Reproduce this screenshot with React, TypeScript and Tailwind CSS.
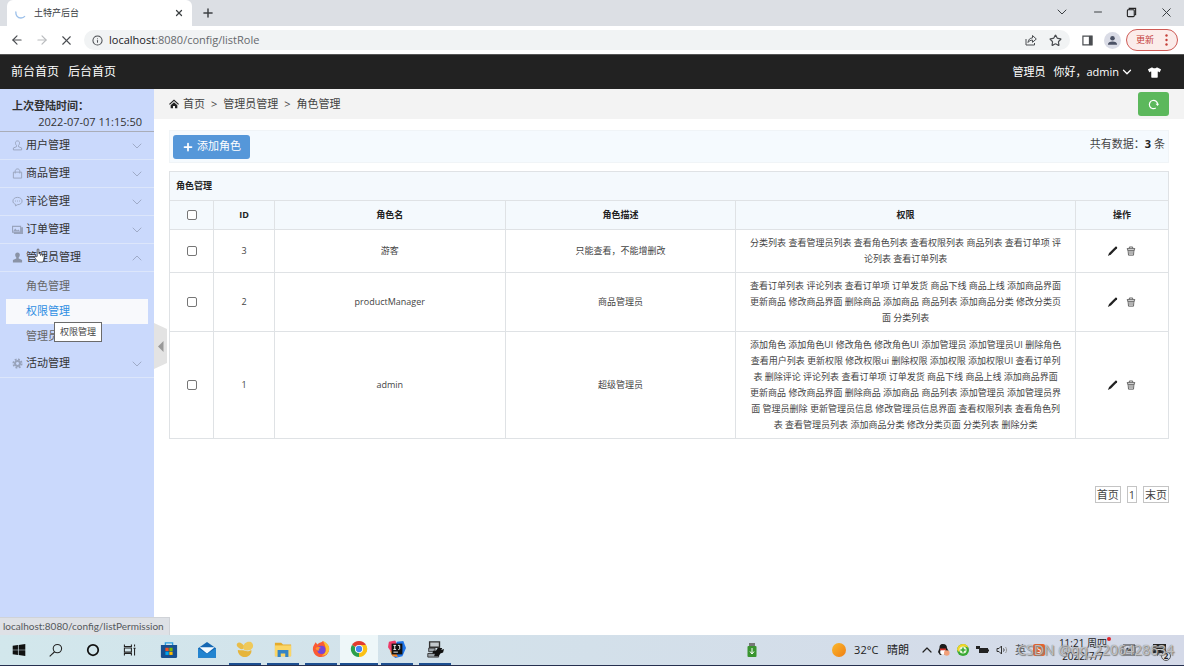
import { useState } from "react";
import type { ReactNode } from "react";
import { ArrowLeft, ArrowRight, ChevronDown, ChevronUp, Info, Minus, Plus, Star, X } from "lucide-react";
import { FaTshirt } from "react-icons/fa";

const roles = [
    {
        id: 3,
        name: "游客",
        desc: "只能查看，不能增删改",
        perms: "分类列表 查看管理员列表 查看角色列表 查看权限列表 商品列表 查看订单项 评论列表 查看订单列表",
    },
    {
        id: 2,
        name: "productManager",
        desc: "商品管理员",
        perms: "查看订单列表 评论列表 查看订单项 订单发货 商品下线 商品上线 添加商品界面 更新商品 修改商品界面 删除商品 添加商品 商品列表 添加商品分类 修改分类页面 分类列表",
    },
    {
        id: 1,
        name: "admin",
        desc: "超级管理员",
        perms: "添加角色 添加角色UI 修改角色 修改角色UI 添加管理员 添加管理员UI 删除角色 查看用户列表 更新权限 修改权限ui 删除权限 添加权限 添加权限UI 查看订单列表 删除评论 评论列表 查看订单项 订单发货 商品下线 商品上线 添加商品界面 更新商品 修改商品界面 删除商品 添加商品 商品列表 添加管理员 添加管理员界面 管理员删除 更新管理员信息 修改管理员信息界面 查看权限列表 查看角色列表 查看管理员列表 添加商品分类 修改分类页面 分类列表 删除分类",
    },
];

/* ---------- sidebar icons ---------- */
const iconClass = "w-[11px] h-[11px] text-[#98a3bb]";

const UserIcon = () => (
    <svg viewBox="0 0 12 12" className={iconClass} fill="none" stroke="currentColor">
        <path d="M6 1C4.300 1 3.600 2.200 3.800 3.600c.1 1 .5 1.800 1.100 2.300v1.400L1.500 8.700v2.100h9V8.700L7.100 7.300V5.900c.6-.5 1-1.300 1.100-2.300C8.400 2.200 7.700 1 6 1Z" />
    </svg>
);
const BagIcon = () => (
    <svg viewBox="0 0 12 12" className={iconClass} fill="none" stroke="currentColor">
        <path d="M1.500 4.500h9v6.500h-9zM3.500 6V3.500C3.500 2 4.500 1 6 1s2.500 1 2.500 2.500V6" />
    </svg>
);
const CommentIcon = () => (
    <svg viewBox="0 0 12 12" className={iconClass} fill="none" stroke="currentColor">
        <path d="M6 1.500c2.900 0 5 1.700 5 4s-2.100 4-5 4l-2.200 1.300.1-1.700C2.100 8.500 1 7.200 1 5.500c0-2.300 2.100-4 5-4Z" />
        <path d="M3.300 5.500h1M5.500 5.500h1M7.700 5.500h1" />
    </svg>
);
const OrderIcon = () => (
    <svg viewBox="0 0 12 12" className={iconClass}>
        <path d="M0 2h10v1.500h2V11H2V9.500H0Z" fill="currentColor" />
        <path d="M1.200 3.200h7.600v5H1.200z" fill="#cbd9fc" />
        <path d="m1.200 8 2.300-3 2 2 1.300-1 2 2Z" fill="currentColor" />
    </svg>
);
const AdminIcon = () => (
    <svg viewBox="0 0 12 12" className={iconClass} fill="#8a93a6">
        <path d="M6 .5C4.100.5 3.300 1.800 3.500 3.500c.1 1 .5 1.900 1.200 2.400v1.300L1 8.600V11.500h10V8.600L7.300 7.200V5.900c.7-.5 1.100-1.400 1.200-2.400C8.700 1.800 7.900.5 6 .5Z" />
    </svg>
);
const GearIcon = () => (
    <svg viewBox="0 0 12 12" className={iconClass} fill="none" stroke="currentColor">
        <circle cx="6" cy="6" r="4.500" strokeWidth="2" strokeDasharray="2 1.530" />
        <circle cx="6" cy="6" r="2.700" strokeWidth="2.200" />
    </svg>
);

const menu = [
    { label: "用户管理", icon: <UserIcon /> },
    { label: "商品管理", icon: <BagIcon /> },
    { label: "评论管理", icon: <CommentIcon /> },
    { label: "订单管理", icon: <OrderIcon /> },
    { label: "管理员管理", icon: <AdminIcon />, children: ["角色管理", "权限管理", "管理员管理"] },
    { label: "活动管理", icon: <GearIcon /> },
];

function BrowserChrome() {
    return (
        <header>
            {/* Tab strip */}
            <div className="h-[26px] bg-[#dcdfe4] flex items-center pl-[7px] text-[#3c4043]">
                <div className="w-[185px] h-full bg-white rounded-t-md flex items-center px-2">
                    <svg viewBox="0 0 12 12" className="w-3 h-3" fill="none" stroke="#9cc0ea" strokeWidth="1.300">
                        <path d="M1 4.500C.300 8 2.500 11 6 11c1.600 0 3-.6 4-1.800" />
                    </svg>
                    <span className="ml-[7px] text-[9px] flex-1">土特产后台</span>
                    <button aria-label="关闭标签页"><X className="w-[10px] h-[10px]" strokeWidth={3} /></button>
                </div>
                <button aria-label="新标签页" className="ml-[9px]"><Plus className="w-[14px] h-[14px]" strokeWidth={2.5} /></button>
                <div className="ml-auto flex items-center gap-[22px] pr-[10px] pb-0.5">
                    <button aria-label="搜索标签页"><ChevronDown className="w-4 h-4" strokeWidth={1.5} /></button>
                    <button aria-label="最小化"><Minus className="w-3 h-3" /></button>
                    <button aria-label="还原">
                        <svg viewBox="0 0 12 12" className="w-[11px] h-[11px]" fill="none" stroke="#222" strokeWidth="1.200">
                            <rect x="1.500" y="3" width="7.500" height="7.500" rx="1" />
                            <path d="M3.500 3V1.500h7v7H9" />
                        </svg>
                    </button>
                    <button aria-label="关闭"><X className="w-[15px] h-[15px]" strokeWidth={1.6} /></button>
                </div>
            </div>

            {/* Address bar */}
            <div className="h-7 bg-white flex items-center pl-[10px] pr-[6px] text-[#4a4d51]">
                <button aria-label="后退"><ArrowLeft className="w-[14px] h-[14px]" /></button>
                <button aria-label="前进" className="ml-[11px] text-[#b9bbbe]"><ArrowRight className="w-[14px] h-[14px]" /></button>
                <button aria-label="停止" className="ml-[10px]"><X className="w-[15px] h-[15px]" strokeWidth={1.8} /></button>
                <div className="ml-[10px] flex-1 h-5 rounded-full bg-[#f1f3f4] flex items-center px-2">
                    <Info className="w-[11px] h-[11px]" strokeWidth={2.2} />
                    <span className="ml-[6px] text-[11px] flex-1 text-[#66696d]"><span className="text-[#202124]">localhost</span>:8080/config/listRole</span>
                    <svg viewBox="0 0 12 12" className="w-3 h-3" fill="none" stroke="currentColor">
                        <path d="M1 5v6h8.500V9M3 8.500c.3-3 2-4.500 4.500-4.600V1.500L11.300 5 7.500 8.300V6.100C5.500 6.100 4 6.900 3 8.500Z" />
                    </svg>
                    <button aria-label="收藏" className="ml-3"><Star className="w-[13px] h-[13px]" strokeWidth={2.2} /></button>
                </div>
                <svg viewBox="0 0 12 12" className="ml-3 w-[11px] h-[11px]">
                    <path d="M1 1.200h10v9.600H1z" fill="none" stroke="#4a4d51" strokeWidth="1.300" />
                    <path d="M7.500 1h3.500v10H7.500z" fill="#4a4d51" />
                </svg>
                <span className="ml-[11px] w-[17px] h-[17px] rounded-full bg-[#dadce6] flex items-center justify-center">
                    <svg viewBox="0 0 12 12" className="w-[11px] h-[11px]" fill="#4b5265">
                        <circle cx="6" cy="3.500" r="2.500" />
                        <path d="M1 10.500C1 8 3 7 6 7s5 1 5 3.500Z" />
                    </svg>
                </span>
                <button className="ml-[5px] w-[52px] h-[22px] rounded-full border border-[#cf5b56] bg-[#fbecea] text-[#c5403a] text-[9px] flex items-center justify-between pl-[9px] pr-[9px]">
                    更新
                    <svg viewBox="0 0 3 12" className="w-[3px] h-3" fill="#c5403a">
                        <circle cx="1.500" cy="1.500" r="1.200" />
                        <circle cx="1.500" cy="6" r="1.200" />
                        <circle cx="1.500" cy="10.500" r="1.200" />
                    </svg>
                </button>
            </div>
        </header>
    );
}

function NavBar() {
    return (
        <nav className="h-[35px] bg-[#222222] text-white text-[12px] flex items-center pl-[11px] pr-[23px] border-t border-[#555]">
            <a href="#front">前台首页</a>
            <a href="#back" className="ml-[9px]">后台首页</a>
            <span className="ml-auto text-[11px]">管理员</span>
            <button className="ml-2 text-[11px] flex items-center gap-px">
                你好，admin
                <ChevronDown className="w-[14px] h-[14px]" strokeWidth={2.2} />
            </button>
            <button aria-label="换肤" className="ml-[14px]"><FaTshirt className="w-[13px] h-[13px]" /></button>
        </nav>
    );
}

function SideBar() {
    return (
        <aside className="relative w-[154px] shrink-0 bg-[#cad9fc] text-[#333]">
            <div className="h-[43px] pt-[9px] pl-3 pr-3 border-b border-[#a9adb8] text-[11px] leading-4">
                <p className="font-bold">上次登陆时间：</p>
                <p className="text-right">2022-07-07 11:15:50</p>
            </div>
            <ul>
                {menu.map((item) => (
                    <li key={item.label}>
                        <a href="#menu" className="h-7 pl-3 pr-[9px] flex items-center border-b border-[#dce6fb] text-[11px]">
                            {item.icon}
                            <span className="ml-[3px] flex-1">{item.label}</span>
                            {item.children
                                ? <ChevronUp className="w-4 h-4 text-[#9fabc8]" strokeWidth={1.5} />
                                : <ChevronDown className="w-4 h-4 text-[#9fabc8]" strokeWidth={1.5} />}
                        </a>
                        {item.children && (
                            <ul className="px-[6px] pt-[2px] pb-px text-[11px] text-[#666]">
                                {item.children.map((child) => (
                                    <li key={child}>
                                        <a
                                            href="#sub"
                                            className={`h-[25px] pl-5 flex items-center ${child === "权限管理" ? "bg-[#f8f9fc] text-[#2f8fe3]" : ""}`}
                                        >
                                            {child}
                                        </a>
                                    </li>
                                ))}
                            </ul>
                        )}
                    </li>
                ))}
            </ul>

            {/* Hover tooltip */}
            <div className="absolute left-[54px] top-[233px] h-5 px-[5px] bg-white border border-[#6b6b6b] text-[9px] text-[#444] flex items-center">
                权限管理
            </div>

            {/* Hand pointer */}
            <svg viewBox="0 0 12 16" className="absolute left-[34px] top-[159px] w-[11px] h-[15px]" fill="#fff" stroke="#333" strokeWidth=".8">
                <path d="M3.500 9V1.800c0-1.300 1.800-1.300 1.800 0V6l4.500 1c1 .3 1.500.9 1.400 1.900l-.7 4-.9 2.300H4.500L1 10.600c-.7-1.200.4-2 1.300-1.200Z" />
                <path d="M7.200 6.500v2M9.200 7v2" />
            </svg>

            {/* Collapse handle */}
            <button aria-label="收起菜单" className="absolute left-full top-[234px]">
                <svg viewBox="0 0 13 46" className="w-[13px] h-[46px]">
                    <path d="M0 0 13 6v34L0 46Z" fill="#e3e3e3" />
                    <path d="M9.500 18v11L4 23.500Z" fill="#999" />
                </svg>
            </button>

            {/* Link target shown by the browser */}
            <div className="absolute left-0 bottom-0 w-[170px] h-[18px] pl-[3px] bg-[#dee1e6] border-t border-r border-[#d0d3d8] font-[Lato] text-[10px] text-[#55585c] flex items-center whitespace-nowrap">
                localhost:8080/config/listPermission
            </div>
        </aside>
    );
}

function Tick({ label, checked, onChange }: { label: string; checked: boolean; onChange: () => void }) {
    return (
        <input
            type="checkbox"
            aria-label={label}
            checked={checked}
            onChange={onChange}
            className="appearance-none block mx-auto w-[10px] h-[10px] bg-white border border-[#767676] rounded-[2px] checked:bg-[#0075ff]"
        />
    );
}

const PencilIcon = () => (
    <svg viewBox="0 0 12 12" className="w-[11px] h-[11px]" fill="#222">
        <path d="M9.200.8c.9-.7 2.400.7 1.800 1.700L4.300 9.400 1 11l1.300-3.500Z" />
    </svg>
);
const TrashIcon = () => (
    <svg viewBox="0 0 12 12" className="w-[10px] h-[10px]" fill="none" stroke="#666" strokeWidth="1.200">
        <path d="M1 3.200h10M4 3V1.200h4V3M2 3.200v2h8v-2M2.500 5.200 3 11h6l.5-5.800M4.800 5.500V10M7.200 5.500V10" />
    </svg>
);

function RoleTable() {
    const [picked, setPicked] = useState<number[]>([]);
    const all = picked.length === roles.length;
    const toggle = (id: number) =>
        setPicked(picked.includes(id) ? picked.filter((p) => p !== id) : [...picked, id]);

    return (
        <table className="mt-2 w-full table-fixed border-collapse text-[9px] leading-4 text-center text-[#444] [&_th]:border [&_td]:border [&_th]:border-[#dfe2e5] [&_td]:border-[#dfe2e5]">
            <colgroup>
                <col className="w-[44px]" />
                <col className="w-[61px]" />
                <col />
                <col />
                <col className="w-[34%]" />
                <col className="w-[93px]" />
            </colgroup>
            <thead className="bg-[#f4f9fd] text-[#222]">
                <tr className="h-[29px]">
                    <th colSpan={6} className="text-left px-[6px]">角色管理</th>
                </tr>
                <tr className="h-[29px]">
                    <th><Tick label="全选" checked={all} onChange={() => setPicked(all ? [] : roles.map((r) => r.id))} /></th>
                    <th>ID</th>
                    <th>角色名</th>
                    <th>角色描述</th>
                    <th>权限</th>
                    <th>操作</th>
                </tr>
            </thead>
            <tbody>
                {roles.map((role) => (
                    <tr key={role.id}>
                        <td><Tick label={role.name} checked={picked.includes(role.id)} onChange={() => toggle(role.id)} /></td>
                        <td>{role.id}</td>
                        <td>{role.name}</td>
                        <td>{role.desc}</td>
                        <td className="px-3 py-[5px]">{role.perms}</td>
                        <td>
                            <div className="flex items-center justify-center gap-2">
                                <button aria-label="编辑"><PencilIcon /></button>
                                <button aria-label="删除"><TrashIcon /></button>
                            </div>
                        </td>
                    </tr>
                ))}
            </tbody>
        </table>
    );
}

function MainPanel() {
    return (
        <main className="flex-1 min-w-0 bg-white text-[#444] text-[11px]">
            {/* Breadcrumb */}
            <div className="h-[30px] bg-[#f3f3f3] flex items-center gap-[6px] px-[15px]">
                <a href="#home" className="flex items-center gap-1">
                    <svg viewBox="0 0 12 12" className="w-[10px] h-[10px]" fill="#222">
                        <path d="M6 .5 12 6l-1 1-5-4.500L1 7 0 6Z" />
                        <path d="m6 3.800 4 3.700V11H7.200V8.500H4.800V11H2V7.500Z" />
                    </svg>
                    首页
                </a>
                <span>&gt;</span>
                <span>管理员管理</span>
                <span>&gt;</span>
                <span>角色管理</span>
                <button aria-label="刷新" className="ml-auto w-[31px] h-6 rounded-[3px] bg-[#5cb85c] flex items-center justify-center">
                    <svg viewBox="0 0 12 12" className="w-[11px] h-[11px]" fill="none" stroke="#fff" strokeWidth="1.300">
                        <path d="M8.500 9.800A4.500 4.500 0 1 1 10.500 6" />
                        <path d="M8.300 5.300h3.800L10.400 7.700Z" fill="#fff" stroke="none" />
                    </svg>
                </button>
            </div>

            <div className="px-[15px] pt-[11px]">
                <div className="h-[33px] px-[3px] bg-[#f5fafe] border border-[#f0f4f7] flex items-center justify-between">
                    <button className="w-[77px] h-6 rounded-[3px] bg-[#5597d9] text-white flex items-center justify-center gap-[3px]">
                        <Plus className="w-3 h-3" strokeWidth={3.5} />
                        添加角色
                    </button>
                    <span className="pb-1">共有数据：<b className="text-[#222]">3</b> 条</span>
                </div>

                <RoleTable />

                <div className="mt-[47px] flex justify-end gap-[6px] leading-[15px]">
                    <a href="#first" className="border border-[#c4c4c4] px-px">首页</a>
                    <a href="#1" className="border border-[#c4c4c4] px-px">1</a>
                    <a href="#last" className="border border-[#c4c4c4] px-px">末页</a>
                </div>
            </div>
        </main>
    );
}

/* ---------- taskbar ---------- */
const launchers: { name: string; icon: ReactNode }[] = [
    {
        name: "开始",
        icon: <path d="M1 4 8.500 2.900V9.500H1zM9.500 2.700 19 1.500v8H9.500zM1 10.500h7.500v6.600L1 16zM9.500 10.500H19v8L9.500 17.300z" fill="#111" />,
    },
    {
        name: "搜索",
        icon: <g fill="none" stroke="#222" strokeWidth="1.500"><circle cx="12" cy="8" r="6" /><path d="m8 12.500-7 6.500" /></g>,
    },
    { name: "Cortana", icon: <circle cx="10" cy="10" r="7.500" fill="none" stroke="#111" strokeWidth="2.500" /> },
    {
        name: "任务视图",
        icon: <path d="M2 2v3h10V2M2 18v-3h10v3M2 7h10v6H2zM16.500 2v3M16.500 8v10M15 7.500h3" fill="none" stroke="#222" strokeWidth="1.500" />,
    },
];

const apps: { name: string; running: boolean; active?: boolean; icon: ReactNode }[] = [
    {
        name: "Store",
        running: false,
        icon: (
            <>
                <path d="M6 5V2h8v3" fill="none" stroke="#2a9be0" strokeWidth="1.500" />
                <path d="M1 4.500h18v13a1.500 1.500 0 0 1-1.500 1.500h-15A1.500 1.500 0 0 1 1 17.500Z" fill="#174f91" />
                <path d="M6 7.500h3.600v3.600H6z" fill="#f25022" /><path d="M10.400 7.500H14v3.600h-3.600z" fill="#7fba00" />
                <path d="M6 11.900h3.600v3.600H6z" fill="#00a4ef" /><path d="M10.400 11.900H14v3.600h-3.600z" fill="#ffb900" />
            </>
        ),
    },
    {
        name: "邮件",
        running: false,
        icon: (
            <>
                <path d="M0 8 10 1l10 7v10.500H0Z" fill="#1467b3" />
                <path d="M1.500 7h17L10 14Z" fill="#f5fbff" />
                <path d="m0 8 10 6.500L20 8v10.500H0Z" fill="#2384d0" />
            </>
        ),
    },
    {
        name: "Navicat",
        running: true,
        icon: (
            <>
                <ellipse cx="5" cy="6.500" rx="4.500" ry="3" transform="rotate(35 5 6.500)" fill="#e9bd49" />
                <path d="M8 8c0-4 4-7 8-6 4 2 4 7 0 9-4 1-8 1-8-3Z" fill="#efc95b" />
                <path d="M2 11c3 1 5 0 8 1 3 1 5 0 7-1 1 4-3 8-7 8-5 0-8-4-8-8Z" fill="#e6b53c" />
            </>
        ),
    },
    {
        name: "文件资源管理器",
        running: true,
        icon: (
            <>
                <path d="M1 3h7l2 2h9v13H1Z" fill="#e5ab2c" />
                <path d="M1 6h18v12H1Z" fill="#fbd666" />
                <path d="M4 11h12v8h-3.500v-4h-5v4H4Z" fill="#3584c4" />
            </>
        ),
    },
    {
        name: "Firefox",
        running: true,
        icon: (
            <>
                <path d="M10 19A9 9 0 0 1 1.500 7L4 2.500 6 5c2-3 5-2 6-4 4 2 7 5 7 9a9 9 0 0 1-9 9Z" fill="#fa5a34" />
                <path d="M12 1c5 2 8 6 7 10s-5 7-8 6c5-2 6-8 1-16Z" fill="#ffc02f" />
                <circle cx="10.500" cy="11" r="4.500" fill="#7646d8" />
                <path d="M4 9c2-2 5-1 6 0-2 0-3 1-2 3-2 0-4-1-4-3Z" fill="#ff9130" />
            </>
        ),
    },
    {
        name: "Chrome",
        running: true,
        active: true,
        icon: (
            <>
                <path d="M10 10 2.200 5.500a9 9 0 0 1 15.600 0Z" fill="#e33b2e" />
                <path d="M10 10h8L17.800 5.500A9 9 0 0 1 10 19Z" fill="#fbc116" />
                <path d="M10 10v9A9 9 0 0 1 2.200 5.500Z" fill="#2d9f4c" />
                <path d="M10 5.500h7.800a9 9 0 0 1 .6 8L14 12Z" fill="#fbc116" />
                <circle cx="10" cy="10" r="4.500" fill="#fff" />
                <circle cx="10" cy="10" r="3.500" fill="#4285f4" />
            </>
        ),
    },
    {
        name: "IntelliJ IDEA",
        running: true,
        icon: (
            <>
                <path d="m1 2 7-1.500L12 8 4 14 0 8Z" fill="#ee3a68" />
                <path d="m10 2 7-1 3 8-4 9-8 2-4-4Z" fill="#1e74e8" />
                <path d="m2 12 3 6 6 1-3-7Z" fill="#f58a2c" />
                <path d="M4 4h12v12H4z" fill="#111" />
                <path d="M6 6h3M7.500 6v4.500M6 10.500h3M11 6h2v3.500c0 1-.8 1.200-1.800 1M6 13.500h5" stroke="#fff" fill="none" />
            </>
        ),
    },
    {
        name: "录屏",
        running: true,
        icon: (
            <>
                <path d="M4 2h11v6H4z" fill="#c3c9cd" stroke="#333" strokeWidth="1.500" />
                <path d="M3 9h7v4H3zM2 15h12v4H2z" fill="#9aa2a8" stroke="#333" />
                <path d="M8 12h3l2-3h5l-1 2 3-1-1 4-3 1-2 3H9l1-3H7Z" fill="#111" />
            </>
        ),
    },
];

function TaskBar() {
    return (
        <footer className="relative h-[31px] flex items-stretch bg-gradient-to-r from-[#d2e7ec] to-[#d4d9e8] border-b border-[#26304f] text-[#222]">
            {launchers.map((l) => (
                <button key={l.name} aria-label={l.name} className="w-[37px] flex items-center justify-center">
                    <svg viewBox="0 0 20 20" className="w-[14px] h-[14px]">{l.icon}</svg>
                </button>
            ))}
            <div className="ml-0.5 flex">
                {apps.map((a) => (
                    <button
                        key={a.name}
                        aria-label={a.name}
                        className={`w-[38px] flex flex-col items-center ${a.active ? "bg-[#eef7f9]" : ""}`}
                    >
                        <span className="flex-1 flex items-center">
                            <svg viewBox="0 0 20 20" className="w-[18px] h-[18px]">{a.icon}</svg>
                        </span>
                        {a.running && <span className={`h-0.5 bg-[#1d4f91] ${a.active ? "w-full" : "w-8"}`} />}
                    </button>
                ))}
            </div>

            {/* Tray */}
            <div className="ml-auto flex items-center pr-[17px]">
                <svg viewBox="0 0 10 14" className="w-[10px] h-[14px]">
                    <path d="M2 0h6v4H2z" fill="#777" />
                    <rect x=".500" y="3" width="9" height="11" rx="1" fill="#39942f" />
                    <path d="M5 5v6M3 8.500 5 11l2-2.500" fill="none" stroke="#fff" />
                </svg>
                <span className="ml-[75px] w-[14px] h-[14px] rounded-full bg-gradient-to-br from-[#f9b92e] to-[#ef7d12]" />
                <span className="ml-2 text-[11px] whitespace-nowrap">32°C&nbsp;&nbsp; 晴朗</span>
                <ChevronUp className="ml-[10px] w-4 h-4" strokeWidth={1.8} />
                <span className="ml-[3px] flex items-center gap-[7px]">
                    <svg viewBox="0 0 12 12" className="w-3 h-3">
                        <path d="M5 0c3 0 4 2 4 4l2 4-2 3H2L0 8l1.500-4C1.500 2 2 0 5 0Z" fill="#1c1c1c" />
                        <ellipse cx="5" cy="8" rx="2.800" ry="3" fill="#fff" />
                        <path d="M2 4.500h6v1.800H2z" fill="#d8322a" />
                        <circle cx="8.800" cy="9" r="2.800" fill="#f2a07a" />
                    </svg>
                    <svg viewBox="0 0 12 12" className="w-3 h-3">
                        <circle cx="6" cy="6" r="6" fill="#39a935" />
                        <path d="M0 6a6 6 0 0 1 6-6c3 0 5 2 5.500 4C9 2 4 2 2 8Z" fill="#f3d529" />
                        <circle cx="6" cy="6" r="3.600" fill="#e9f6dc" />
                        <path d="M6 3.500v5M3.500 6h5" stroke="#39a935" strokeWidth="1.600" />
                    </svg>
                    <svg viewBox="0 0 13 12" className="w-[13px] h-3">
                        <path d="M3 4h9v5H3z" fill="#222" /><path d="M12 5.500h1v2h-1zM0 2h4v3H0z" fill="#222" />
                    </svg>
                    <svg viewBox="0 0 12 12" className="w-3 h-3" fill="none" stroke="#333">
                        <path d="M1 4.500h2L5.500 2v8L3 7.500H1ZM7.500 4.500c.7 1 .7 2 0 3" /><path d="M9.500 3c1.500 2 1.500 4 0 6" stroke="#999" />
                    </svg>
                    <span className="text-[11px] text-[#555]">英</span>
                    <span className="w-3 h-3 rounded-[2px] bg-[#e8642c] text-white text-[9px] leading-3 text-center">S</span>
                </span>
                <span className="relative ml-[14px] text-[10px] leading-[13px] text-center whitespace-nowrap">
                    11:21 周四<br />2022/7/7
                    <span className="absolute -right-1 top-0 w-1 h-1 rounded-full bg-[#e0252b]" />
                </span>
                <svg viewBox="0 0 14 12" className="ml-[15px] w-[14px] h-3" fill="none" stroke="#333">
                    <path d="M1 1h12v10H1z" /><path d="m5 4 4 2-4 2Z" fill="#333" />
                </svg>
                <span className="relative ml-[17px]">
                    <svg viewBox="0 0 14 14" className="w-[14px] h-[14px]">
                        <path d="M0 1h13v9H7l-3 3v-3H0z" fill="#222" />
                        <path d="M2.500 4h8M2.500 6.500h8" stroke="#ddd" />
                    </svg>
                    <span className="absolute -right-1 -bottom-1 w-[10px] h-[10px] rounded-full border border-[#555] bg-[#dde2ec] text-[8px] leading-[8px] text-center font-bold">2</span>
                </span>
            </div>
            <span className="absolute right-[10px] top-[7px] text-[14px] leading-4 text-white/60 [text-shadow:0_0_1px_#555,1px_1px_1px_#888] whitespace-nowrap">
                CSDN @qq_2206428634
            </span>
        </footer>
    );
}

export default function App() {
    return (
        <div className="min-h-screen flex flex-col font-['Open_Sans','Noto_Sans_CJK_SC',sans-serif]">
            <BrowserChrome />
            <NavBar />
            <div className="flex-1 flex">
                <SideBar />
                <MainPanel />
            </div>
            <TaskBar />
        </div>
    );
}
